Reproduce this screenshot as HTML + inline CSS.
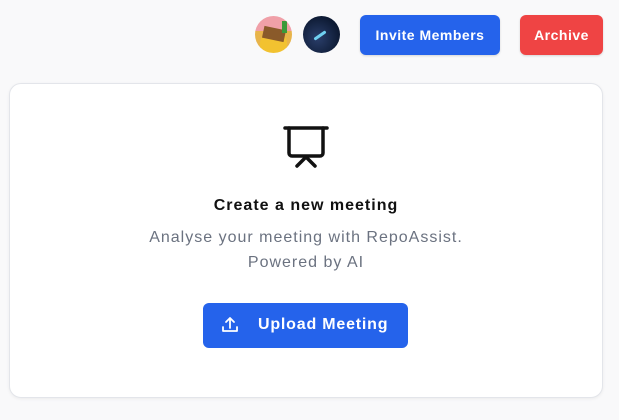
<!DOCTYPE html>
<html><head><style>
body{margin:0;width:619px;height:420px;background:#f9f9fa;font-family:"Liberation Sans",sans-serif;position:relative;overflow:hidden}
.av{position:absolute;top:16px;width:37px;height:37px;border-radius:50%;overflow:hidden}
.btn{position:absolute;top:15px;height:40px;border-radius:6px;color:#fff;font-weight:bold;font-size:14px;letter-spacing:0.5px;display:flex;align-items:center;justify-content:center;box-shadow:0 1px 2px rgba(0,0,0,.15)}
.card{position:absolute;left:9px;top:83px;width:592px;height:313px;background:#fff;border:1px solid #e3e5ea;border-radius:12px;box-shadow:0 1px 3px rgba(0,0,0,.06)}
</style></head><body>
<div class="av" style="left:255px;background:radial-gradient(circle at 50% 75%,#f2c230 0 40%,transparent 41%),linear-gradient(#f0a0a8 0 40%,#e8b44a 40%);"><div style="position:absolute;left:8px;top:12px;width:22px;height:12px;background:#8a5a2a;transform:rotate(12deg)"></div><div style="position:absolute;left:27px;top:5px;width:5px;height:12px;background:#3a9a3a"></div></div>
<div class="av" style="left:303px;background:radial-gradient(circle at 40% 60%,#2a3e6a,#0d1a33 70%)"><div style="position:absolute;left:10px;top:18px;width:14px;height:3px;background:#6fd0f0;transform:rotate(-35deg);border-radius:2px"></div></div>
<div class="btn" style="left:360px;width:140px;background:#2563eb">Invite Members</div>
<div class="btn" style="left:520px;width:83px;background:#ef4444">Archive</div>
<div class="card">
<svg style="position:absolute;left:272px;top:41px" width="48" height="45" viewBox="0 0 48 45" fill="none" stroke="#111" stroke-width="3.5" stroke-linecap="round" stroke-linejoin="round"><path d="M3 3H45"/><path d="M7 3V28a3 3 0 0 0 3 3H38a3 3 0 0 0 3-3V3"/><path d="M24 32L15 41M24 32L33 41"/></svg>
<div style="position:absolute;left:0;right:0;top:113px;text-align:center;font-weight:bold;font-size:16px;letter-spacing:1px;color:#111">Create a new meeting</div>
<div style="position:absolute;left:0;right:0;top:141px;text-align:center;font-size:16px;letter-spacing:1px;color:#6b7280;line-height:25px">Analyse your meeting with RepoAssist.<br>Powered by AI</div>
<div style="position:absolute;left:193px;top:219px;width:205px;height:45px;background:#2563eb;border-radius:6px;color:#fff;font-weight:bold;font-size:16px;letter-spacing:0.8px">
<svg style="position:absolute;left:18px;top:13px" width="18" height="18" viewBox="0 0 18 18" fill="none" stroke="#fff" stroke-width="1.8" stroke-linecap="round" stroke-linejoin="round"><path d="M2 11v4h14v-4M9 12V2M5 6l4-4 4 4"/></svg>
<span style="position:absolute;left:55px;top:13px">Upload Meeting</span></div>
</div>
</body></html>
